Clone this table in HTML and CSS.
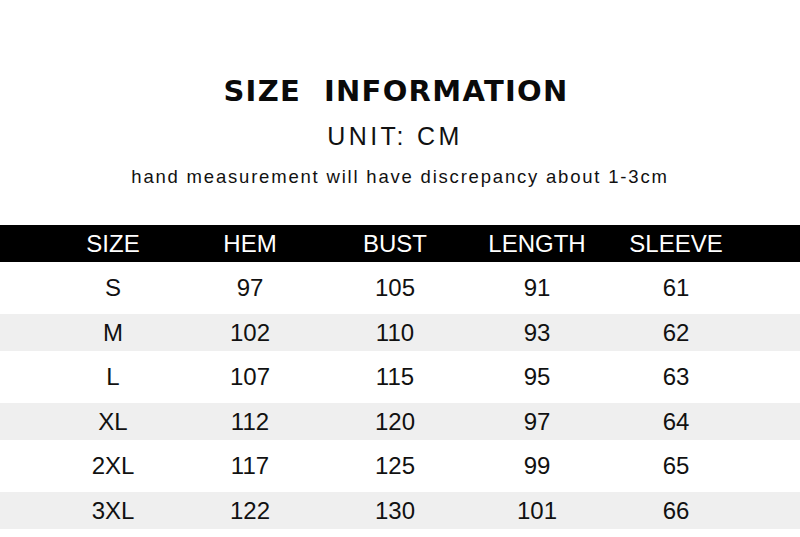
FILE: index.html
```html
<!DOCTYPE html>
<html>
<head>
<meta charset="utf-8">
<link rel="stylesheet" href="styles.css">
</head>
<body>
<div class="page">
  <header class="intro">
    <h1 class="title">SIZE&nbsp; INFORMATION</h1>
    <div class="unit">UNIT: CM</div>
    <p class="note">hand measurement will have discrepancy about 1-3cm</p>
  </header>
  <div class="table">
    <div class="row head"><span>SIZE</span><span>HEM</span><span>BUST</span><span>LENGTH</span><span>SLEEVE</span></div>
    <div class="row white"><span>S</span><span>97</span><span>105</span><span>91</span><span>61</span></div>
    <div class="row gray"><span>M</span><span>102</span><span>110</span><span>93</span><span>62</span></div>
    <div class="row white"><span>L</span><span>107</span><span>115</span><span>95</span><span>63</span></div>
    <div class="row gray"><span>XL</span><span>112</span><span>120</span><span>97</span><span>64</span></div>
    <div class="row white"><span>2XL</span><span>117</span><span>125</span><span>99</span><span>65</span></div>
    <div class="row gray"><span>3XL</span><span>122</span><span>130</span><span>101</span><span>66</span></div>
  </div>
</div>
</body>
</html>
```
FILE: styles.css
```css
html, body {
  margin: 0;
  padding: 0;
  background: #ffffff;
}
.page {
  width: 800px;
  height: 537px;
  overflow: hidden;
  font-family: "Liberation Sans", Arial, sans-serif;
  color: #111;
}
.intro {
  display: flex;
  flex-direction: column;
  align-items: center;
  padding-top: 73px;
  height: 152px;
  box-sizing: border-box;
}
.title {
  margin: 0;
  font-family: "DejaVu Sans", sans-serif;
  font-weight: bold;
  font-size: 29px;
  letter-spacing: 1.3px;
  line-height: 36px;
  color: #0a0a0a;
  padding-right: 8px;
}
.unit {
  margin-top: 12px;
  font-size: 25px;
  letter-spacing: 3.4px;
  line-height: 30px;
  padding-right: 10px;
}
.note {
  margin: 16px 0 0;
  font-size: 18.5px;
  letter-spacing: 1.8px;
  line-height: 20px;
}
.table {
  margin-top: 73px;
  display: flex;
  flex-direction: column;
}
.row {
  display: grid;
  grid-template-columns: 140px 134px 156px 128px 150px;
  padding-left: 43px;
  align-items: center;
  font-size: 24px;
}
.row span {
  text-align: center;
}
.head {
  height: 37px;
  background: #000;
  color: #fff;
}
.white {
  height: 52px;
  background: #fff;
}
.gray {
  height: 37px;
  background: #efefef;
}
```
